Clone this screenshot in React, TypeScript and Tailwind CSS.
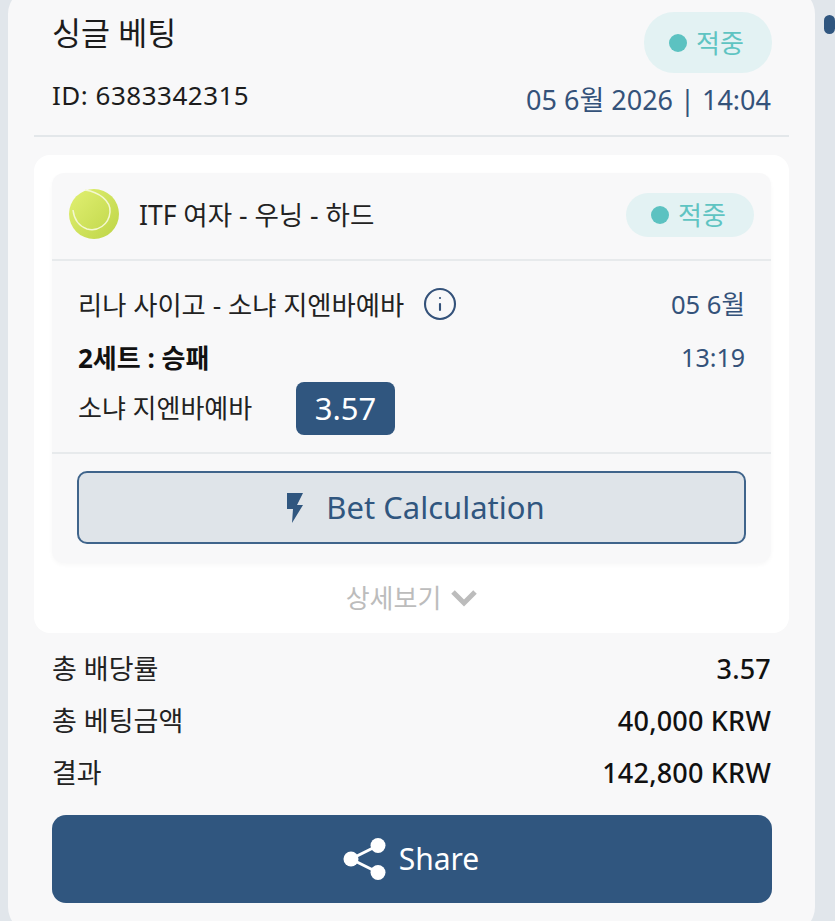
import { Info } from "lucide-react";

const font = { fontFamily: '"Noto Sans", "Noto Sans CJK KR", sans-serif' };

function StatusPill({ className }: { className: string }) {
  return (
    <div className={`flex items-center justify-center bg-[#e3f2f3] pr-[3px] text-[#5fc4c2] ${className}`}>
      <span className="mr-[9px] h-[18px] w-[18px] rounded-full bg-[#5cc2c1]" />
      <span className="text-[26px] leading-none">적중</span>
    </div>
  );
}

function TennisBall() {
  return (
    <svg width="50" height="50" viewBox="0 0 50 50" className="-mt-[4px] shrink-0">
      <defs>
        <linearGradient id="ball" x1="0.15" y1="0.15" x2="0.9" y2="0.85">
          <stop offset="0" stopColor="#dcec6c" />
          <stop offset="1" stopColor="#c2d84c" />
        </linearGradient>
      </defs>
      <circle cx="25" cy="25" r="25" fill="url(#ball)" />
      <path d="M16 1 C30 3 42 12 41 23 C40 36 28 43 18 40 C10 37 5 30 4 21" fill="none" stroke="#f4f8d0" strokeWidth="1.5" />
    </svg>
  );
}

function ShareIcon() {
  return (
    <svg width="44" height="44" viewBox="0 0 44 44" className="shrink-0">
      <path d="M35 8.5 L8 22 L35 35.5" fill="none" stroke="#fff" strokeWidth="3" />
      <circle cx="35" cy="8.5" r="7.5" fill="#fff" />
      <circle cx="8" cy="22" r="7.5" fill="#fff" />
      <circle cx="35" cy="35.5" r="7.5" fill="#fff" />
    </svg>
  );
}

function SummaryRow({ label, value }: { label: string; value: string }) {
  return (
    <div className="flex h-[52px] items-center justify-between">
      <span className="text-[27px] text-[#222]">{label}</span>
      <span className="text-[27px] font-medium tracking-[0.2px] text-[#111]">{value}</span>
    </div>
  );
}

export default function App() {
  return (
    <div className="flex h-[921px] w-[835px] overflow-hidden bg-[#e1e6eb]" style={font}>
      <div className="-mt-[12px] ml-[8px] h-[945px] w-[807px] shrink-0 rounded-[26px] bg-[#f8f8f9] pt-[12px]">
        <div className="px-[44px]">
          <div className="flex h-[135px] justify-between">
            <div>
              <div className="mt-[13px] text-[31.5px] leading-[40px] text-[#1c1c1c]">싱글 베팅</div>
              <div className="mt-[25px] text-[26px] leading-[34px] tracking-[0.5px] text-[#1c1c1c]">ID: 6383342315</div>
            </div>
            <div className="flex flex-col items-end">
              <StatusPill className="-mr-[1px] mt-[12px] h-[61px] w-[128px] rounded-[30px]" />
              <div className="mt-[10px] text-[27px] leading-[34px] text-[#34527a]">05 6월 2026 | 14:04</div>
            </div>
          </div>
        </div>
        <div className="mx-[26px] h-[2px] bg-[#e3e7ea]" />
        <div className="mx-[26px] mt-[18px] h-[478px] rounded-[16px] bg-white px-[18px] pt-[18px]">
          <div className="h-[390px] rounded-[12px] bg-[#f8f8f9] shadow-[0_2px_4px_rgba(0,0,0,0.03)]">
            <div className="flex h-[88px] items-center border-b-2 border-[#e7eaec] pl-[17px] pr-[17px]">
              <TennisBall />
              <span className="ml-[20px] flex-1 text-[26.5px] text-[#222]">ITF 여자 - 우닝 - 하드</span>
              <StatusPill className="-mt-[2px] h-[44px] w-[128px] rounded-[22px]" />
            </div>
            <div className="h-[193px] border-b-2 border-[#e7eaec] px-[26px] pt-[24px]">
              <div className="flex items-center justify-between">
                <div className="flex items-center">
                  <span className="text-[26.3px] leading-[40px] text-[#222]">리나 사이고 - 소냐 지엔바예바</span>
                  <Info className="-mt-[2px] ml-[18px] h-[36px] w-[36px] text-[#34527a]" strokeWidth={1.4} />
                </div>
                <span className="text-[25.6px] text-[#34527a]">05 6월</span>
              </div>
              <div className="mt-[14px] flex items-center justify-between">
                <span className="text-[26px] font-bold leading-[36px] text-[#111]">2세트 : 승패</span>
                <span className="text-[25px] text-[#34527a]">13:19</span>
              </div>
              <div className="mt-[5px] flex items-center">
                <span className="w-[218px] text-[26px] text-[#222]">소냐 지엔바예바</span>
                <span className="flex h-[53px] w-[99px] items-center justify-center rounded-[8px] bg-[#30567f] text-[31px] text-white">3.57</span>
              </div>
            </div>
            <div className="px-[25px] pt-[17px]">
              <div className="flex h-[73px] items-center justify-center rounded-[10px] border-2 border-[#3f648b] bg-[#dfe4e9] pl-[8px] text-[#30567f]">
                <svg width="17" height="30" viewBox="0 0 17 30" className="mr-[23px]">
                  <path d="M1 0 H17 L11 12 H17 L6 30 L7 16 H1 Z" fill="#30567f" />
                </svg>
                <span className="text-[31px] leading-none">Bet Calculation</span>
              </div>
            </div>
          </div>
          <div className="flex h-[70px] items-center justify-center text-[#bcbcbc]">
            <span className="text-[26px]">상세보기</span>
            <svg width="26" height="18" viewBox="0 0 26 18" className="ml-[10px]">
              <path d="M2 3 L13 14 L24 3" fill="none" stroke="#bcbcbc" strokeWidth="5" />
            </svg>
          </div>
        </div>
        <div className="mt-[10px] px-[44px]">
          <SummaryRow label="총 배당률" value="3.57" />
          <SummaryRow label="총 베팅금액" value="40,000 KRW" />
          <SummaryRow label="결과" value="142,800 KRW" />
          <div className="-mr-[1px] mt-[16px] flex h-[88px] items-center justify-center rounded-[14px] bg-[#30567f] pr-[2px] text-white">
            <ShareIcon />
            <span className="ml-[12px] text-[30px] leading-none">Share</span>
          </div>
        </div>
      </div>
      <div className="ml-[9px] mt-[15px] h-[19px] w-[11px] rounded-full bg-[#30567f]" />
    </div>
  );
}
